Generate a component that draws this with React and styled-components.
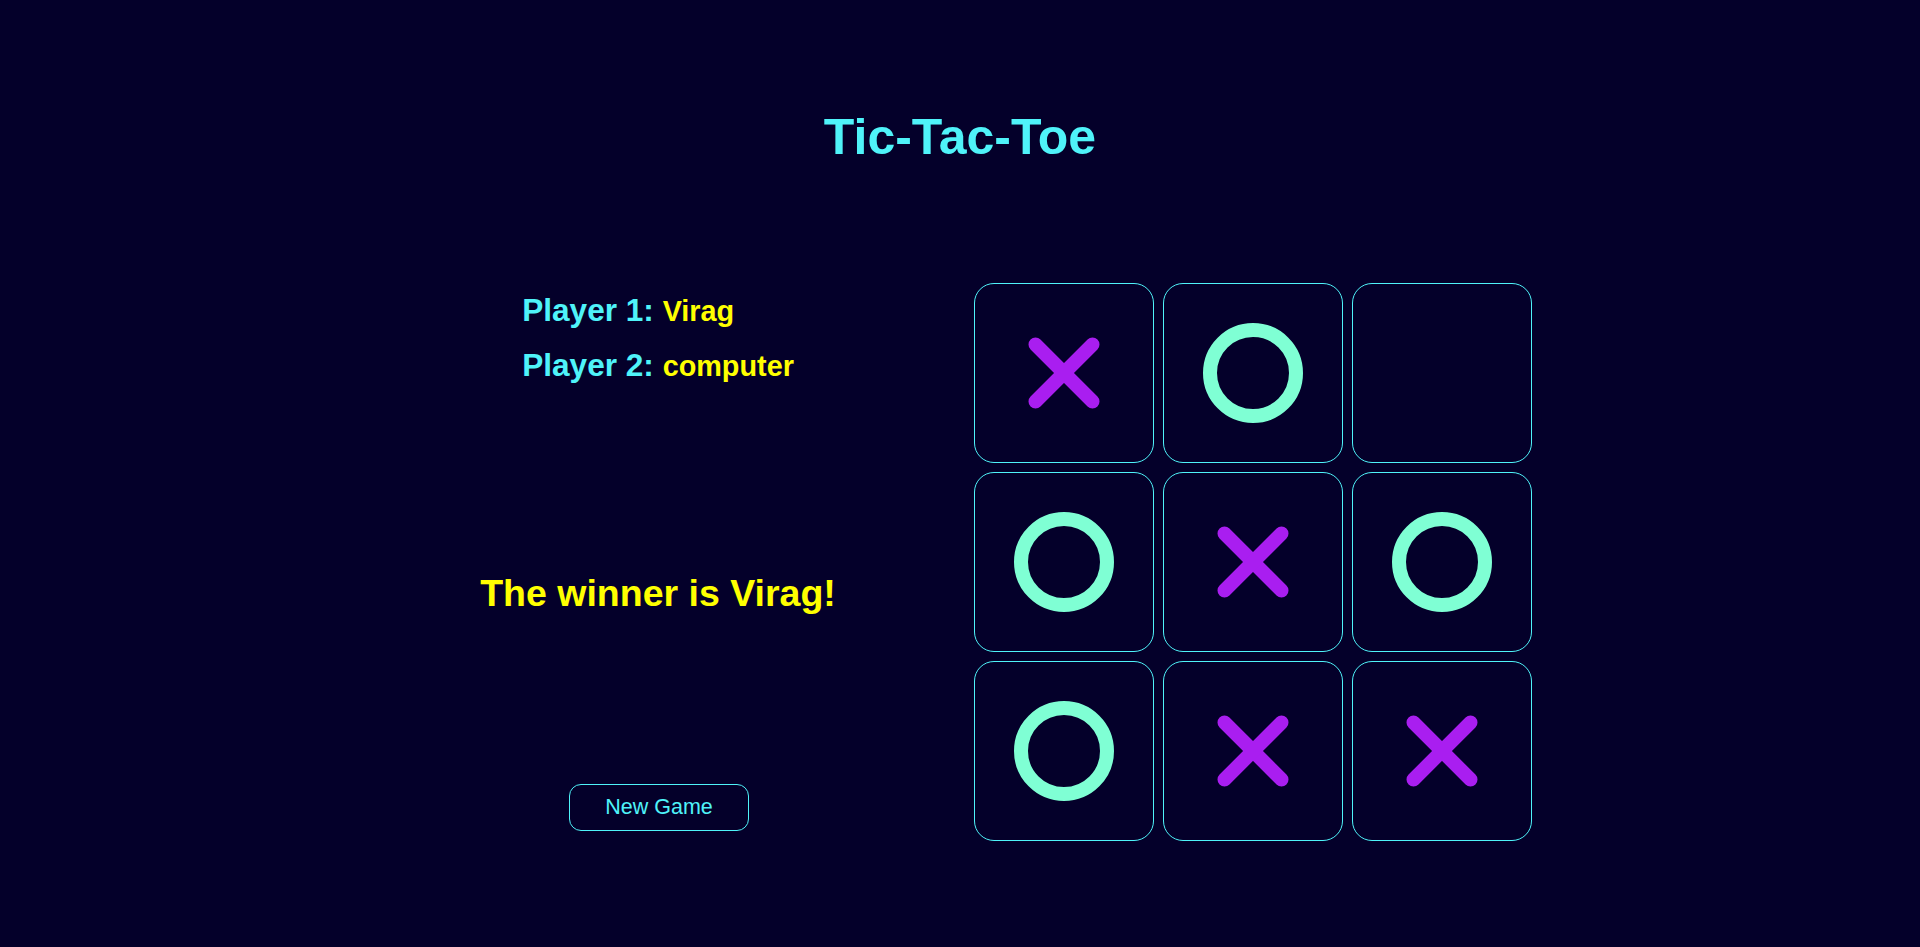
import React from "react";
import styled, { createGlobalStyle } from "styled-components";

const GlobalStyle = createGlobalStyle`
  html, body {
    margin: 0;
    padding: 0;
    background: #04002a;
  }
  body {
    font-family: "Liberation Sans", Arial, sans-serif;
    min-height: 947px;
  }
`;

const CYAN = "#4ff3f9";
const YELLOW = "#ffff00";
const PURPLE = "#a91ef0";
const AQUA = "#7fffd4";

const Page = styled.div`
  display: flex;
  flex-direction: column;
  align-items: center;
  min-height: 947px;
`;

const Title = styled.h1`
  margin: 109px 0 0;
  font-size: 50px;
  line-height: 57px;
  font-weight: 700;
  color: ${CYAN};
`;

const Main = styled.main`
  display: flex;
  gap: 46px;
  margin-top: 117px;
`;

const Side = styled.section`
  width: 540px;
  display: flex;
  flex-direction: column;
  align-items: center;
`;

const Players = styled.div`
  margin-top: 9px;
  display: flex;
  flex-direction: column;
  gap: 19px;
`;

const PlayerRow = styled.div`
  height: 36px;
  line-height: 36px;
  font-size: 31.6px;
  font-weight: 700;
  color: ${CYAN};
  white-space: nowrap;
`;

const Name = styled.span`
  font-size: 28.8px;
  line-height: 36px;
  color: ${YELLOW};
`;

const Winner = styled.h2`
  margin: 189px 0 0;
  font-size: 37.5px;
  line-height: 42px;
  font-weight: 700;
  color: ${YELLOW};
  white-space: nowrap;
`;

const NewGame = styled.button`
  margin-top: 170px;
  margin-left: 2px;
  width: 180px;
  height: 47px;
  border: 1px solid ${CYAN};
  border-radius: 12px;
  background: transparent;
  color: ${CYAN};
  font-family: "Liberation Sans", Arial, sans-serif;
  font-size: 21.5px;
  cursor: pointer;
`;

const Board = styled.div`
  display: grid;
  grid-template-columns: repeat(3, 180px);
  grid-auto-rows: 180px;
  gap: 9px;
`;

const Cell = styled.div`
  box-sizing: border-box;
  border: 1px solid ${CYAN};
  border-radius: 20px;
  display: flex;
  align-items: center;
  justify-content: center;
`;

const Mark = styled.svg`
  display: block;
`;

const XMark = () => (
  <Mark width="178" height="178" viewBox="0 0 178 178">
    <g stroke={PURPLE} strokeWidth="14" strokeLinecap="round">
      <line x1="60.5" y1="60.5" x2="117.5" y2="117.5" />
      <line x1="117.5" y1="60.5" x2="60.5" y2="117.5" />
    </g>
  </Mark>
);

const OMark = () => (
  <Mark width="178" height="178" viewBox="0 0 178 178">
    <circle cx="89" cy="89" r="43" fill="none" stroke={AQUA} strokeWidth="14" />
  </Mark>
);

const board = ["X", "O", "", "O", "X", "O", "O", "X", "X"];

export default function App() {
  return (
    <>
      <GlobalStyle />
      <Page>
        <Title>Tic-Tac-Toe</Title>
        <Main>
          <Side>
            <Players>
              <PlayerRow>
                Player 1: <Name>Virag</Name>
              </PlayerRow>
              <PlayerRow>
                Player 2: <Name>computer</Name>
              </PlayerRow>
            </Players>
            <Winner>The winner is Virag!</Winner>
            <NewGame>New Game</NewGame>
          </Side>
          <Board>
            {board.map((v, i) => (
              <Cell key={i}>
                {v === "X" ? <XMark /> : v === "O" ? <OMark /> : null}
              </Cell>
            ))}
          </Board>
        </Main>
      </Page>
    </>
  );
}
